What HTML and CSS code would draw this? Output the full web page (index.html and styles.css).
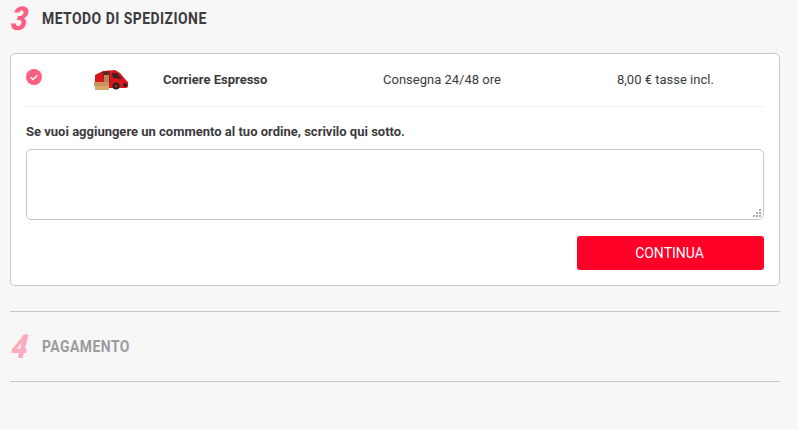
FILE: index.html
```html
<!DOCTYPE html>
<html lang="it">
  <head>
    <meta charset="UTF-8" />
    <title>Checkout</title>
    <link rel="stylesheet" href="styles.css">
  </head>
  <body>
    <div class="checkout">
      <div class="step-title">
        <span class="step-num">3</span>
        <h2>METODO DI SPEDIZIONE</h2>
      </div>

      <div class="card">
        <div class="carrier">
          <span class="check">
            <svg width="18" height="18" viewBox="0 0 18 18">
              <circle cx="8" cy="8" r="8" fill="#fb5f82" />
              <path d="M4.6 8.3 L7 10.5 L11.4 6.2" fill="none" stroke="#fff" stroke-width="1.5" />
            </svg>
          </span>
          <span class="van">
            <svg width="36" height="22" viewBox="0 0 36 22">
              <path d="M2 6 L10 2 L22 1 L27 4 L32 10 L35 13 L35 18 L33 19 L10 19 L2 15 Z" fill="#d9161c" />
              <path d="M19 4 L24 4 L29 10 L20 9 Z" fill="#3d2226" />
              <path d="M10 3 L16 2 L17 13 L11 13 Z" fill="#4a2e22" />
              <rect x="11" y="6" width="5" height="7" fill="#b98850" />
              <rect x="1" y="13" width="15" height="4" fill="#c9955c" />
              <rect x="2" y="17" width="14" height="4" fill="#d8a76e" />
              <circle cx="23" cy="17" r="3.5" fill="#2a2222" />
              <circle cx="23" cy="17" r="1.3" fill="#a33" />
              <circle cx="32" cy="16" r="2" fill="#2a2222" />
            </svg>
          </span>
          <span class="carrier-name">Corriere Espresso</span>
          <span class="carrier-time">Consegna 24/48 ore</span>
          <span class="carrier-price">8,00 € tasse incl.</span>
        </div>

        <label class="comment-label" for="comment">Se vuoi aggiungere un commento al tuo ordine, scrivilo qui sotto.</label>
        <div class="comment-box">
          <textarea id="comment" class="comment"></textarea>
          <svg class="grip" width="9" height="9" viewBox="0 0 9 9">
            <path d="M6 0h2v2H6zM3 3h2v2H3zM6 3h2v2H6zM0 6h2v2H0zM3 6h2v2H3zM6 6h2v2H6z" fill="#a8a8a8" />
          </svg>
        </div>

        <div class="actions">
          <button type="button">CONTINUA</button>
        </div>
      </div>

      <div class="step-next">
        <div class="step-title">
          <span class="step-num">4</span>
          <h2>PAGAMENTO</h2>
        </div>
      </div>
    </div>
  </body>
</html>
```

FILE: styles.css
```css
* {
  margin: 0;
  padding: 0;
  box-sizing: border-box;
}

body {
  background-color: #f7f7f7;
  font-family: "Roboto", sans-serif;
  color: #3b3b3d;
  font-size: 13px;
  overflow: hidden;
}

.checkout {
  width: 770px;
  margin-left: 10px;
}

.step-title {
  display: flex;
  align-items: center;
  height: 36px;
}

.step-num {
  width: 32px;
  padding-left: 2px;
  font-size: 33px;
  font-weight: 900;
  font-style: italic;
  color: #fb5f82;
  transform: scaleX(0.88) skewX(-7deg);
  transform-origin: left center;
}

.step-title h2 {
  font-size: 16px;
  font-weight: 700;
  letter-spacing: 0.55px;
  transform: scaleX(0.87);
  transform-origin: left center;
  white-space: nowrap;
}

.card {
  margin-top: 17px;
  height: 233px;
  background: #fff;
  border: 1px solid #c8c8c8;
  border-radius: 5px;
  padding: 0 15px;
}

.carrier {
  display: flex;
  align-items: center;
  height: 53px;
  padding-bottom: 2px;
  border-bottom: 1px solid #efefef;
}

.check {
  display: flex;
  width: 67px;
  margin-top: -3px;
}

.van {
  display: flex;
  width: 70px;
  margin-top: 1px;
}

.carrier-name {
  width: 220px;
  font-weight: 700;
}

.carrier-time {
  width: 234px;
}

.comment-label {
  display: block;
  margin-top: 16px;
  font-weight: 700;
  line-height: 17px;
}

.comment-box {
  position: relative;
  margin-top: 9px;
}

.comment {
  display: block;
  width: 100%;
  height: 71px;
  background: #fff;
  border: 1px solid #c8c8c8;
  border-radius: 5px;
  resize: none;
}

.grip {
  position: absolute;
  right: 2px;
  bottom: 2px;
}

.actions {
  display: flex;
  justify-content: flex-end;
  margin-top: 16px;
}

button {
  width: 187px;
  height: 34px;
  padding-right: 2px;
  background-color: #ff0027;
  border: none;
  border-radius: 3px;
  color: #fff;
  font-family: "Roboto", sans-serif;
  font-size: 14px;
}

.step-next {
  margin-top: 25px;
  height: 71px;
  border-top: 1px solid #c8c8c8;
  border-bottom: 1px solid #c8c8c8;
  padding-top: 16px;
}

.step-next .step-num {
  color: #fcaabd;
}

.step-next h2 {
  color: #9c9c9e;
}
```
